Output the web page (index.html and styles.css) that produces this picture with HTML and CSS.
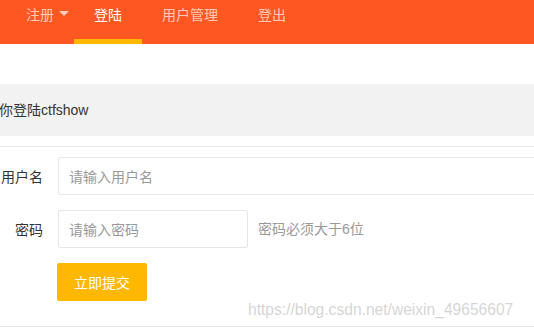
FILE: index.html
```html
<!DOCTYPE html>
<html lang="zh-CN">
<head>
<meta charset="utf-8">
<title>登陆</title>
<link rel="stylesheet" href="styles.css">
</head>
<body>
<div class="nav">
  <a class="nav-item more">注册<span class="caret"></span></a>
  <a class="nav-item active">登陆</a>
  <a class="nav-item">用户管理</a>
  <a class="nav-item">登出</a>
</div>
<div class="quote"><span class="quote-text">你登陆ctfshow</span></div>
<div class="rule"></div>
<form class="form">
  <div class="form-item">
    <label class="form-label">用户名</label>
    <div class="input-block"><input class="input" type="text" placeholder="请输入用户名"></div>
  </div>
  <div class="form-item">
    <label class="form-label">密码</label>
    <div class="input-inline"><input class="input" type="password" placeholder="请输入密码"></div>
    <div class="form-mid">密码必须大于6位</div>
  </div>
  <div class="form-item">
    <div class="btn-row"><button class="btn" type="button">立即提交</button></div>
  </div>
</form>
<div class="bottom-rule"></div>
<div class="watermark">https://blog.csdn.net/weixin_49656607</div>
</body>
</html>
```
FILE: styles.css
```css
* { box-sizing: border-box; }
html, body {
  margin: 0;
  padding: 0;
  background: #fff;
  width: 534px;
  height: 329px;
  overflow: hidden;
  position: relative;
  font-family: "Liberation Sans", "Noto Sans CJK SC", sans-serif;
  font-size: 14px;
  color: #333;
}
.nav {
  height: 44px;
  background: #FF5722;
  display: flex;
  padding-left: 6px;
}
.nav-item {
  position: relative;
  display: flex;
  align-items: flex-start;
  padding: 6px 20px 0;
  height: 44px;
  line-height: 16px;
  color: rgba(255, 255, 255, 0.7);
  font-family: "Noto Sans CJK SC", sans-serif;
  font-size: 14px;
  text-decoration: none;
  white-space: nowrap;
}
.nav-item.more { padding-right: 5px; }
.caret {
  display: inline-block;
  width: 0;
  height: 0;
  margin: 5px 0 0 5px;
  border-left: 5px solid transparent;
  border-right: 5px solid transparent;
  border-top: 5px solid rgba(255, 255, 255, 0.7);
}
.nav-item.active { color: #fff; }
.nav-item.active::after {
  content: "";
  position: absolute;
  left: 0;
  right: 0;
  bottom: 0;
  height: 5px;
  background: #FFB800;
}
.quote {
  margin-top: 40px;
  height: 52px;
  background: #f2f2f2;
  display: flex;
  align-items: center;
  color: #333;
}
.quote-text {
  margin-left: -1px;
  line-height: 20px;
  white-space: nowrap;
}
.rule {
  margin-top: 10px;
  height: 1px;
  background: #e6e6e6;
}
.form {
  margin: 10px 0 0 0;
}
.form-item {
  display: flex;
  margin-bottom: 15px;
}
.form-label {
  flex: 0 0 58px;
  width: 58px;
  padding-right: 15px;
  text-align: right;
  line-height: 38px;
  white-space: nowrap;
  font-family: "Noto Sans CJK SC", sans-serif;
  color: #333;
}
.input-block { flex: 1 1 auto; min-width: 0; }
.input-inline { flex: 0 0 190px; width: 190px; margin-right: 10px; }
.input {
  display: block;
  width: 100%;
  height: 38px;
  border: 1px solid #e6e6e6;
  border-radius: 2px;
  padding: 0 10px;
  font-family: "Noto Sans CJK SC", sans-serif;
  font-size: 14px;
  color: #333;
  background: #fff;
  outline: none;
}
.input-block .input { width: 490px; }
.input::placeholder { color: #999; }
.form-mid {
  line-height: 38px;
  color: #999;
  white-space: nowrap;
  font-family: "Liberation Sans", "Noto Sans CJK SC", sans-serif;
}
.btn-row { padding-left: 57px; }
.btn {
  height: 38px;
  width: 90px;
  padding: 0;
  border: none;
  border-radius: 2px;
  background: #FFB800;
  color: #fff;
  font-family: "Noto Sans CJK SC", sans-serif;
  font-size: 14px;
}
.bottom-rule {
  position: absolute;
  left: 0;
  right: 0;
  top: 326px;
  height: 1px;
  background: #e6e6e6;
}
.watermark {
  position: absolute;
  left: 248px;
  top: 301px;
  font-family: "Liberation Sans", sans-serif;
  font-size: 15.6px;
  line-height: 18px;
  color: rgba(170, 170, 170, 0.5);
  white-space: nowrap;
}
```
